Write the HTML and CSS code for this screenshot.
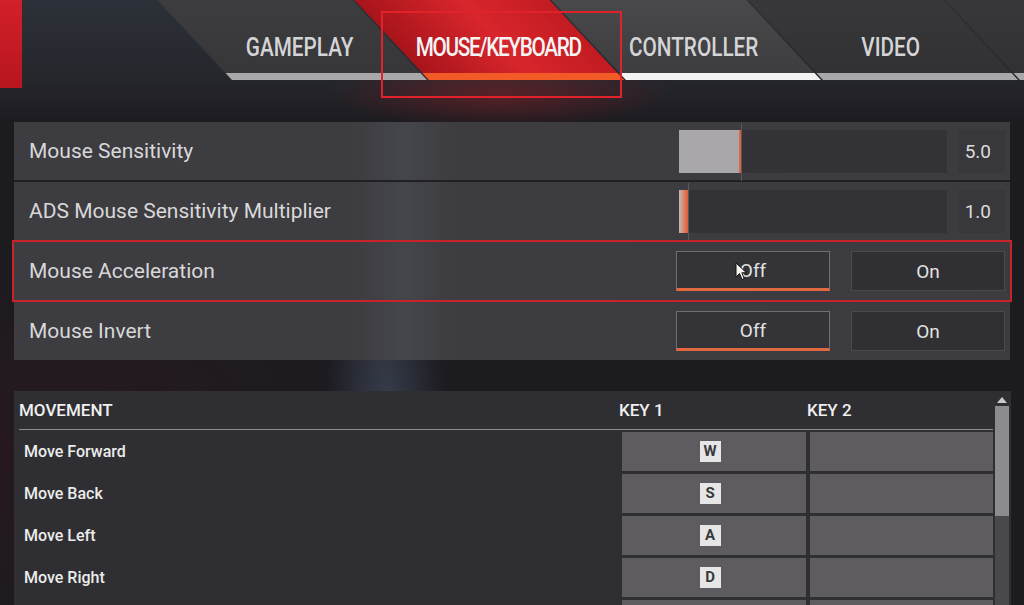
FILE: index.html
```html
<!DOCTYPE html>
<html lang="en">
<head>
  <meta charset="UTF-8" />
  <meta name="viewport" content="width=device-width, initial-scale=1.0" />
  <title>Settings - Mouse/Keyboard</title>
  <link rel="stylesheet" href="styles.css">
</head>
<body>
  <header class="topbar">
    <div class="brand-strip"></div>
    <nav class="tabs">
      <div class="tab"><span>GAMEPLAY</span><i class="bar"></i></div>
      <div class="tab active"><span>MOUSE/KEYBOARD</span><i class="bar"></i></div>
      <div class="tab hover"><span>CONTROLLER</span><i class="bar"></i></div>
      <div class="tab dim"><span>VIDEO</span><i class="bar"></i></div>
      <div class="tab dim"><span></span><i class="bar"></i></div>
    </nav>
    <div class="callout tab-callout"></div>
  </header>

  <section class="settings">
    <div class="row">
      <span class="label">Mouse Sensitivity</span>
      <div class="control">
        <div class="slider"><div class="fill" style="width: 62px"></div></div>
        <div class="value">5.0</div>
      </div>
    </div>
    <div class="row">
      <span class="label">ADS Mouse Sensitivity Multiplier</span>
      <div class="control">
        <div class="slider"><div class="fill low" style="width: 9px"></div></div>
        <div class="value">1.0</div>
      </div>
    </div>
    <div class="row marked">
      <span class="label">Mouse Acceleration</span>
      <div class="control">
        <button class="toggle selected">Off</button>
        <button class="toggle">On</button>
      </div>
    </div>
    <div class="row">
      <span class="label">Mouse Invert</span>
      <div class="control">
        <button class="toggle selected">Off</button>
        <button class="toggle">On</button>
      </div>
    </div>
  </section>

  <section class="bindings">
    <div class="bind-main">
      <div class="bind-head">
        <span>MOVEMENT</span>
        <span class="col-title">KEY 1</span>
        <span class="col-title">KEY 2</span>
      </div>
      <div class="bind-row">
        <span class="action">Move Forward</span>
        <div class="key"><kbd>W</kbd></div>
        <div class="key"></div>
      </div>
      <div class="bind-row">
        <span class="action">Move Back</span>
        <div class="key"><kbd>S</kbd></div>
        <div class="key"></div>
      </div>
      <div class="bind-row">
        <span class="action">Move Left</span>
        <div class="key"><kbd>A</kbd></div>
        <div class="key"></div>
      </div>
      <div class="bind-row">
        <span class="action">Move Right</span>
        <div class="key"><kbd>D</kbd></div>
        <div class="key"></div>
      </div>
      <div class="bind-row">
        <span class="action"></span>
        <div class="key"></div>
        <div class="key"></div>
      </div>
    </div>
    <div class="scrollbar">
      <svg class="arrow" width="10" height="6" viewBox="0 0 10 6"><path d="M0 6 L5 0 L10 6 Z" fill="#c9c8cb"/></svg>
      <div class="track"><div class="thumb"></div></div>
    </div>
  </section>

  <!-- mouse pointer over the first toggle -->
  <svg class="pointer" width="13" height="19" viewBox="0 0 13 19">
    <path d="M1 1 L1 15 L4.5 11.5 L7 17.5 L9.2 16.5 L6.8 10.8 L11.5 10.8 Z" fill="#f4f4f4" stroke="#111" stroke-width="1"/>
  </svg>
</body>
</html>
```

FILE: styles.css
```css
* { box-sizing: border-box; }

html, body {
  height: 605px;
  overflow: hidden;
}

body {
  margin: 0;
  position: relative;
  font-family: Roboto, "Liberation Sans", sans-serif;
  color: #d9d9d9;
  background:
    radial-gradient(ellipse 60px 220px at 385px 420px, rgba(110, 130, 165, 0.35), transparent),
    radial-gradient(ellipse 300px 200px at 60px 450px, rgba(60, 20, 30, 0.35), transparent),
    #1c1b20;
}

/* ---- top tab bar ---- */

.topbar {
  position: relative;
  display: flex;
  align-items: flex-start;
  height: 122px;
  background:
    radial-gradient(ellipse 170px 34px at 500px 94px, rgba(190, 30, 35, 0.35), transparent),
    linear-gradient(180deg, #2c3038 0, #26272d 78px, #1c1b20 122px);
}

.brand-strip {
  flex: none;
  width: 22px;
  height: 88px;
  background: linear-gradient(180deg, #d3202a, #b7161f);
}

.tabs {
  flex: none;
  display: flex;
  gap: 2px;
  margin-left: 210px;
}

.tab {
  flex: none;
  width: 195px;
  height: 80px;
  display: flex;
  flex-direction: column;
  background: linear-gradient(180deg, #3d3c3f, #363538);
  transform: skewX(43deg);
  transform-origin: bottom;
}

.tab span {
  display: block;
  height: 24px;
  margin-top: 36px;
  line-height: 24px;
  font-size: 25px;
  font-weight: 500;
  text-align: center;
  color: #d4d4d6;
  white-space: nowrap;
  transform: skewX(-43deg) scaleX(0.83);
}

.tab .bar {
  margin-top: auto;
  height: 7px;
  background: #a8a7aa;
}

.tab.active {
  background: linear-gradient(90deg, #a8141b, #d8262c 55%, #c21b22);
}

.tab.active span {
  color: #f4f4f4;
  letter-spacing: -1.6px;
}

.tab.active .bar { background: #f25b26; }

.tab.hover {
  background: linear-gradient(180deg, #49484b, #3c3b3e);
}

.tab.hover .bar { background: #f3f3f3; }

.tab.dim {
  background: linear-gradient(180deg, #38373a, #313033);
}

.callout {
  position: absolute;
  border: 2px solid #e2222a;
}

.tab-callout {
  left: 381px;
  top: 11px;
  width: 241px;
  height: 87px;
}

/* ---- settings rows ---- */

.settings {
  display: flex;
  flex-direction: column;
  gap: 2px;
  margin: 0 14px;
  background: #202024;
}

.row {
  display: flex;
  align-items: center;
  height: 58px;
  padding-left: 15px;
  background: linear-gradient(90deg, #3d3c40 0, #3d3c40 340px, #44464c 390px, #3d3c40 440px, #3c3b3f 100%);
}

.row.marked {
  outline: 2px solid #c8222a;
  position: relative;
  z-index: 1;
}

.label {
  flex: 1;
  font-size: 21px;
  color: #d8d8da;
}

.control {
  flex: none;
  display: flex;
  align-items: center;
  width: 334px;
  height: 100%;
  padding-right: 5px;
}

.slider {
  display: flex;
  width: 268px;
  height: 43px;
  margin-left: 3px;
  background: #333236;
}

.fill {
  position: relative;
  height: 100%;
  background: #a9a7aa;
  border-right: 2px solid #e0643e;
}

.fill.low {
  background: linear-gradient(90deg, #c8b8b2, #d9704f);
}

/* thumb line runs the full row height */
.fill::after {
  content: "";
  position: absolute;
  right: -3px;
  top: -7px;
  bottom: -8px;
  width: 1px;
  background: #58575c;
}

.value {
  width: 47px;
  height: 43px;
  margin-left: auto;
  padding-right: 14px;
  line-height: 43px;
  text-align: right;
  font-size: 19px;
  color: #dcdcdc;
  background: #38373b;
}

.toggle {
  width: 154px;
  height: 40px;
  font-family: inherit;
  font-size: 19px;
  color: #e2e2e2;
  background: #302f33;
  border: 1px solid #4a494d;
}

.toggle + .toggle {
  margin-left: auto;
}

.toggle.selected {
  background: #343337;
  border-color: #6f6e72;
  border-bottom: 3px solid #e2683f;
}

/* ---- key bindings ---- */

.bindings {
  display: flex;
  margin: 31px 13px 0 14px;
  height: 214px;
  overflow: hidden;
  background: #2f2f33;
}

.bind-main {
  flex: 1;
  padding-left: 5px;
}

.bind-head,
.bind-row {
  display: grid;
  grid-template-columns: 1fr 184px 183px;
  column-gap: 4px;
}

.bind-head {
  height: 39px;
  align-items: center;
  border-bottom: 1px solid #8d8c90;
  margin-bottom: 2px;
  font-size: 17px;
  font-weight: 500;
  color: #f0f0f0;
}

.col-title {
  margin-left: -3px;
}

.bind-row {
  height: 39px;
  margin-bottom: 3px;
  align-items: center;
}

.action {
  padding-left: 5px;
  font-size: 16px;
  font-weight: 500;
  color: #ececec;
}

.key {
  display: flex;
  align-items: center;
  justify-content: center;
  height: 100%;
  padding-right: 8px;
  background: #5e5c60;
}

kbd {
  min-width: 21px;
  height: 21px;
  padding: 0 3px;
  line-height: 21px;
  text-align: center;
  font-family: Roboto, "Liberation Sans", sans-serif;
  font-size: 15px;
  font-weight: 700;
  color: #3a393c;
  background: #e6e6e6;
}

.scrollbar {
  flex: none;
  width: 18px;
  display: flex;
  flex-direction: column;
  align-items: center;
}

.arrow {
  margin: 6px 0 3px;
}

.track {
  flex: 1;
  width: 14px;
  background: #49484c;
}

.thumb {
  height: 110px;
  background: #8c8b8f;
}

.pointer {
  position: absolute;
  left: 735px;
  top: 262px;
  z-index: 2;
}
```
